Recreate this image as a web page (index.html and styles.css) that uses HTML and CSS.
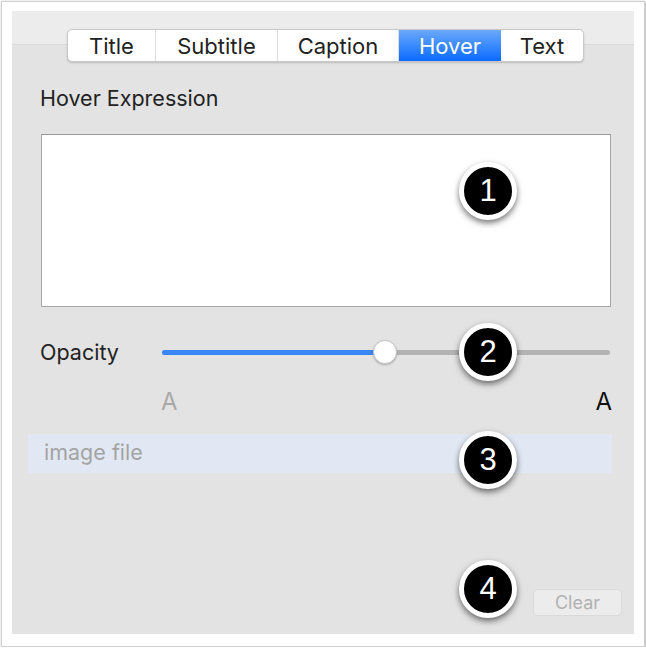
FILE: index.html
```html
<!DOCTYPE html>
<html lang="en">
<head>
    <meta charset="UTF-8">
    <title>Hover Inspector</title>
    <link rel="stylesheet" href="styles.css">
</head>
<body>
    <div class="frame">
        <div class="panel">
            <div class="tabs">
                <div class="tab tab-title">Title</div>
                <div class="tab tab-subtitle">Subtitle</div>
                <div class="tab tab-caption">Caption</div>
                <div class="tab tab-hover active">Hover</div>
                <div class="tab tab-text">Text</div>
            </div>

            <div class="field-label">Hover Expression</div>
            <div class="expression"></div>

            <div class="opacity-row">
                <span class="opacity-label">Opacity</span>
                <div class="slider">
                    <div class="slider-fill" style="width: 223px;"></div>
                    <div class="slider-knob" style="left: 211px;"></div>
                </div>
            </div>

            <div class="size-row">
                <span class="size-small">A</span>
                <span class="size-large">A</span>
            </div>

            <div class="image-field">image file</div>

            <div class="actions">
                <button class="clear-btn">Clear</button>
            </div>
        </div>

        <div class="badge badge-1">1</div>
        <div class="badge badge-2">2</div>
        <div class="badge badge-3">3</div>
        <div class="badge badge-4">4</div>
    </div>
</body>
</html>
```

FILE: styles.css
```css
* {
    margin: 0;
    padding: 0;
    box-sizing: border-box;
}

body {
    font-family: Inter, 'Liberation Sans', sans-serif;
    background: #fff;
    color: #222;
}

.frame {
    position: relative;
    margin: 1px 0 0 1px;
    width: 644px;
    height: 646px;
    padding: 9px 0 0 10px;
    background: #fff;
    border: 1px solid #cfcfcf;
    box-shadow: 1px 1px 3px rgba(0, 0, 0, 0.35);
}

.panel {
    width: 622px;
    height: 623px;
    padding: 0 12px 18px 16px;
    display: flex;
    flex-direction: column;
    background: linear-gradient(#ececec 0 33px, #d9d9d9 33px 34px, #e3e3e3 34px);
}

/* segmented control */
.tabs {
    display: flex;
    width: 517px;
    height: 33px;
    margin: 18px 0 0 39px;
    background: #fff;
    border: 1px solid #c9c9c9;
    border-radius: 5px;
    box-shadow: 0 1px 2px rgba(0, 0, 0, 0.18);
    overflow: hidden;
}

.tab {
    display: flex;
    align-items: center;
    justify-content: center;
    font-size: 22px;
    color: #222;
    border-right: 1px solid #dcdcdc;
}

.tab-title { width: 88px; }
.tab-subtitle { width: 122px; }
.tab-caption { width: 121px; }
.tab-hover { width: 102px; }
.tab-text { flex: 1; border-right: none; }

.tab.active {
    color: #fff;
    background: linear-gradient(#6ba9fb, #0a6bfe);
    border-right: none;
}

.field-label {
    margin: 23px 0 0 12px;
    font-size: 21.5px;
    line-height: 26px;
    color: #222;
}

.expression {
    width: 570px;
    height: 173px;
    margin: 23px 0 0 13px;
    background: #fff;
    border: 1px solid #a6a6a6;
    border-top-color: #9a9a9a;
}

.opacity-row {
    display: flex;
    align-items: center;
    height: 26px;
    margin: 32px 0 0 12px;
}

.opacity-label {
    width: 122px;
    font-size: 21.5px;
    color: #222;
}

.slider {
    position: relative;
    width: 448px;
    height: 5px;
    background: #b3b3b3;
    border-radius: 3px;
}

.slider-fill {
    height: 100%;
    background: #3b86f7;
    border-radius: 3px;
}

.slider-knob {
    position: absolute;
    top: -10px;
    width: 24px;
    height: 24px;
    background: #fff;
    border: 1px solid #c6c6c6;
    border-radius: 50%;
    box-shadow: 0 1px 2px rgba(0, 0, 0, 0.25);
}

.size-row {
    display: flex;
    justify-content: space-between;
    width: 451px;
    height: 26px;
    margin: 24px 0 0 133px;
    font-size: 24px;
    line-height: 26px;
}

.size-small { color: #a9a9a9; }
.size-large { color: #111; }

.image-field {
    height: 39px;
    width: 584px;
    margin-top: 19px;
    padding-left: 16px;
    background: #e1e8f3;
    color: #a4a4a4;
    font-size: 21.5px;
    line-height: 37px;
}

.actions {
    margin-top: auto;
    display: flex;
    justify-content: flex-end;
}

.clear-btn {
    width: 89px;
    height: 27px;
    font-family: inherit;
    font-size: 18px;
    color: #b2b2b2;
    background: #ececec;
    border: 1px solid #dadada;
    border-radius: 5px;
}

/* numbered callouts */
.badge {
    position: absolute;
    left: 457px;
    width: 58px;
    height: 58px;
    display: flex;
    align-items: center;
    justify-content: center;
    background: #000;
    color: #fff;
    border: 5px solid #fff;
    border-radius: 50%;
    box-shadow: 0 3px 6px rgba(0, 0, 0, 0.55);
    font-family: 'Liberation Sans', sans-serif;
    font-size: 31px;
}

.badge-1 { top: 160px; }
.badge-2 { top: 321px; }
.badge-3 { top: 429px; }
.badge-4 { top: 558px; }
```
